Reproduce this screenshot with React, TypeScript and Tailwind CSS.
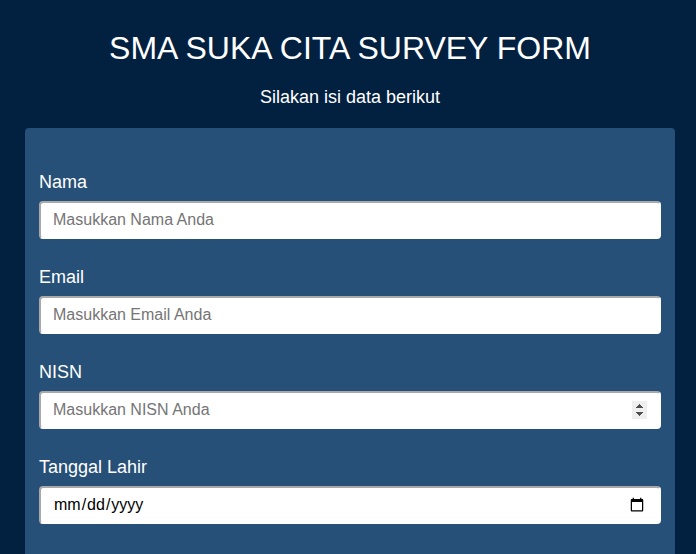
type Field = {
  id: string;
  label: string;
  type: "text" | "email" | "number" | "date";
  placeholder?: string;
};

const fields: Field[] = [
  { id: "nama", label: "Nama", type: "text", placeholder: "Masukkan Nama Anda" },
  { id: "email", label: "Email", type: "email", placeholder: "Masukkan Email Anda" },
  { id: "nisn", label: "NISN", type: "number", placeholder: "Masukkan NISN Anda" },
  { id: "tanggal-lahir", label: "Tanggal Lahir", type: "date" },
];

// Drawn over the browser's own spin button, which stays clickable underneath.
function SpinArrows() {
  return (
    <svg
      aria-hidden="true"
      viewBox="0 0 15 18"
      className="pointer-events-none absolute top-2.5 right-3.5 h-[18px] w-[15px]"
      shapeRendering="crispEdges"
    >
      <rect width="15" height="18" fill="#efefef" />
      <path
        d="M7 3h1v1h1v1h1v1h1v1H4V6h1V5h1V4h1z M4 11h7v1h-1v1H9v1H8v1H7v-1H6v-1H5v-1H4z"
        fill="#505050"
      />
    </svg>
  );
}

function FormField({ id, label, type, placeholder }: Field) {
  return (
    <div className="flex flex-col gap-[5px]">
      <label htmlFor={id} className="self-start text-lg leading-[27px]">
        {label}
      </label>
      <div className="relative">
        <input
          id={id}
          name={id}
          type={type}
          placeholder={placeholder}
          className="block h-[38px] w-full rounded border-2 border-t-[#a9a9a9] border-r-white border-b-white border-l-[#a9a9a9] bg-white px-3 text-base text-black placeholder:text-[#757575] [&::-webkit-inner-spin-button]:opacity-0"
        />
        {type === "number" && <SpinArrows />}
      </div>
    </div>
  );
}

export default function App() {
  return (
    <main className="flex min-h-screen flex-col bg-[#02203f] pt-6 pr-[21px] pl-[25px] font-['Liberation_Sans',Arial,sans-serif] text-white">
      <header className="flex flex-col gap-3 pb-[17px] text-center">
        <h1 className="text-[32px] leading-[48px]">SMA SUKA CITA SURVEY FORM</h1>
        <p className="text-lg leading-[27px]">Silakan isi data berikut</p>
      </header>
      <form className="flex grow flex-col gap-[25px] rounded-t bg-[#265077] px-3.5 pt-[41px] pb-6">
        {fields.map((field) => (
          <FormField key={field.id} {...field} />
        ))}
      </form>
    </main>
  );
}
